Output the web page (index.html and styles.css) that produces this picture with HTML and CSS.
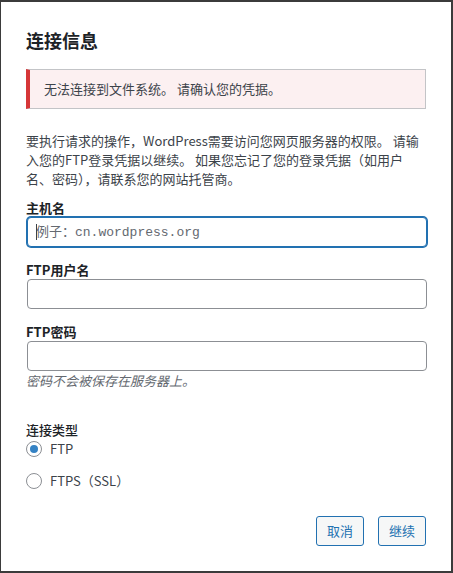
FILE: index.html
```html
<!DOCTYPE html>
<html lang="zh-CN">
<head>
<meta charset="utf-8">
<title>连接信息</title>
<link rel="stylesheet" href="styles.css">
</head>
<body>
<div class="modal">
  <h1 class="title">连接信息</h1>
  <div class="notice">无法连接到文件系统。 请确认您的凭据。</div>
  <p class="intro">要执行请求的操作，WordPress需要访问您网页服务器的权限。 请输入您的FTP登录凭据以继续。 如果您忘记了您的登录凭据（如用户名、密码），请联系您的网站托管商。</p>
  <label class="field first">
    <span class="field-title">主机名</span>
    <span class="input-wrap focused">
      <input class="text-input is-focused" type="text" placeholder="例子：cn.wordpress.org">
    </span>
  </label>
  <label class="field">
    <span class="field-title">FTP用户名</span>
    <span class="input-wrap"><input class="text-input" type="text"></span>
  </label>
  <label class="field">
    <span class="field-title">FTP密码</span>
    <span class="input-wrap"><input class="text-input" type="password"></span>
  </label>
  <p class="help">密码不会被保存在服务器上。</p>
  <fieldset class="conn-type">
    <legend class="legend">连接类型</legend>
    <div class="radios">
      <label class="radio-row"><span class="radio checked"></span><span>FTP</span></label>
      <label class="radio-row"><span class="radio"></span><span>FTPS（SSL）</span></label>
    </div>
  </fieldset>
  <div class="actions">
    <button class="btn" type="button">取消</button>
    <button class="btn" type="button">继续</button>
  </div>
</div>
</body>
</html>
```
FILE: styles.css
```css
html, body {
  margin: 0;
  padding: 0;
}
body {
  background: #3b3b3b;
  width: 453px;
  height: 573px;
  overflow: hidden;
  font-family: "Noto Sans CJK SC", "Noto Sans", sans-serif;
  font-size: 13px;
  color: #3c434a;
}
.modal {
  box-sizing: border-box;
  margin: 2px 2px 0 1px;
  width: 450px;
  height: 569px;
  background: #fff;
  padding: 26px 25px 0 25px;
}
.title {
  margin: 0;
  font-size: 18px;
  line-height: 24px;
  font-weight: 700;
  color: #1d2327;
}
.notice {
  margin-top: 17px;
  box-sizing: border-box;
  height: 40px;
  border: 1px solid #c3c4c7;
  border-left: 4px solid #d63638;
  background: #fcf0f1;
  padding: 9px 14px;
  line-height: 20px;
  color: #3c434a;
}
.intro {
  margin: 22px 0 0;
  line-height: 19px;
  color: #3c434a;
}
.field {
  display: block;
  margin-top: 14px;
}
.field.first {
  margin-top: 11px;
}
.field-title {
  display: block;
  line-height: 18px;
  font-weight: 600;
  color: #1d2327;
}
.input-wrap {
  display: block;
  position: relative;
}
.text-input {
  display: block;
  box-sizing: border-box;
  width: 400px;
  height: 30px;
  margin: 0 0 0 1px;
  padding: 0 8px;
  border: 1px solid #8c8f94;
  border-radius: 4px;
  background: #fff;
  font-family: "Liberation Mono", "Noto Sans CJK SC", monospace;
  font-size: 13px;
  color: #2c3338;
  outline: none;
}
.text-input::placeholder {
  color: #646970;
  opacity: 1;
}
.text-input.is-focused {
  border-color: #2271b1;
  box-shadow: 0 0 0 1px #2271b1;
}
.focused::after {
  content: "";
  position: absolute;
  left: 10px;
  top: 7px;
  width: 1px;
  height: 16px;
  background: #3c434a;
}
.help {
  margin: 0;
  line-height: 19px;
  font-style: italic;
  color: #646970;
}
.conn-type {
  margin: 30px 0 0;
  padding: 0;
  border: 0;
}
.legend {
  padding: 0;
  line-height: 20px;
  font-weight: 500;
  color: #1d2327;
}
.radios {
  display: flex;
  flex-direction: column;
  gap: 14px;
}
.radio-row {
  display: flex;
  align-items: center;
  gap: 8px;
  line-height: 18px;
  height: 18px;
  color: #3c434a;
}
.radio {
  box-sizing: border-box;
  width: 16px;
  height: 16px;
  border: 1px solid #8c8f94;
  border-radius: 50%;
  background: #fff;
  display: flex;
  align-items: center;
  justify-content: center;
}
.radio.checked::before {
  content: "";
  width: 8px;
  height: 8px;
  border-radius: 50%;
  background: #3582c4;
}
.actions {
  margin-top: 26px;
  display: flex;
  justify-content: flex-end;
  gap: 14px;
}
.btn {
  box-sizing: border-box;
  height: 30px;
  padding: 0 10px;
  border: 1px solid #2271b1;
  border-radius: 3px;
  background: #f6f7f7;
  color: #2271b1;
  font-family: "Noto Sans CJK SC", "Noto Sans", sans-serif;
  font-size: 13px;
  line-height: 28px;
}
```
